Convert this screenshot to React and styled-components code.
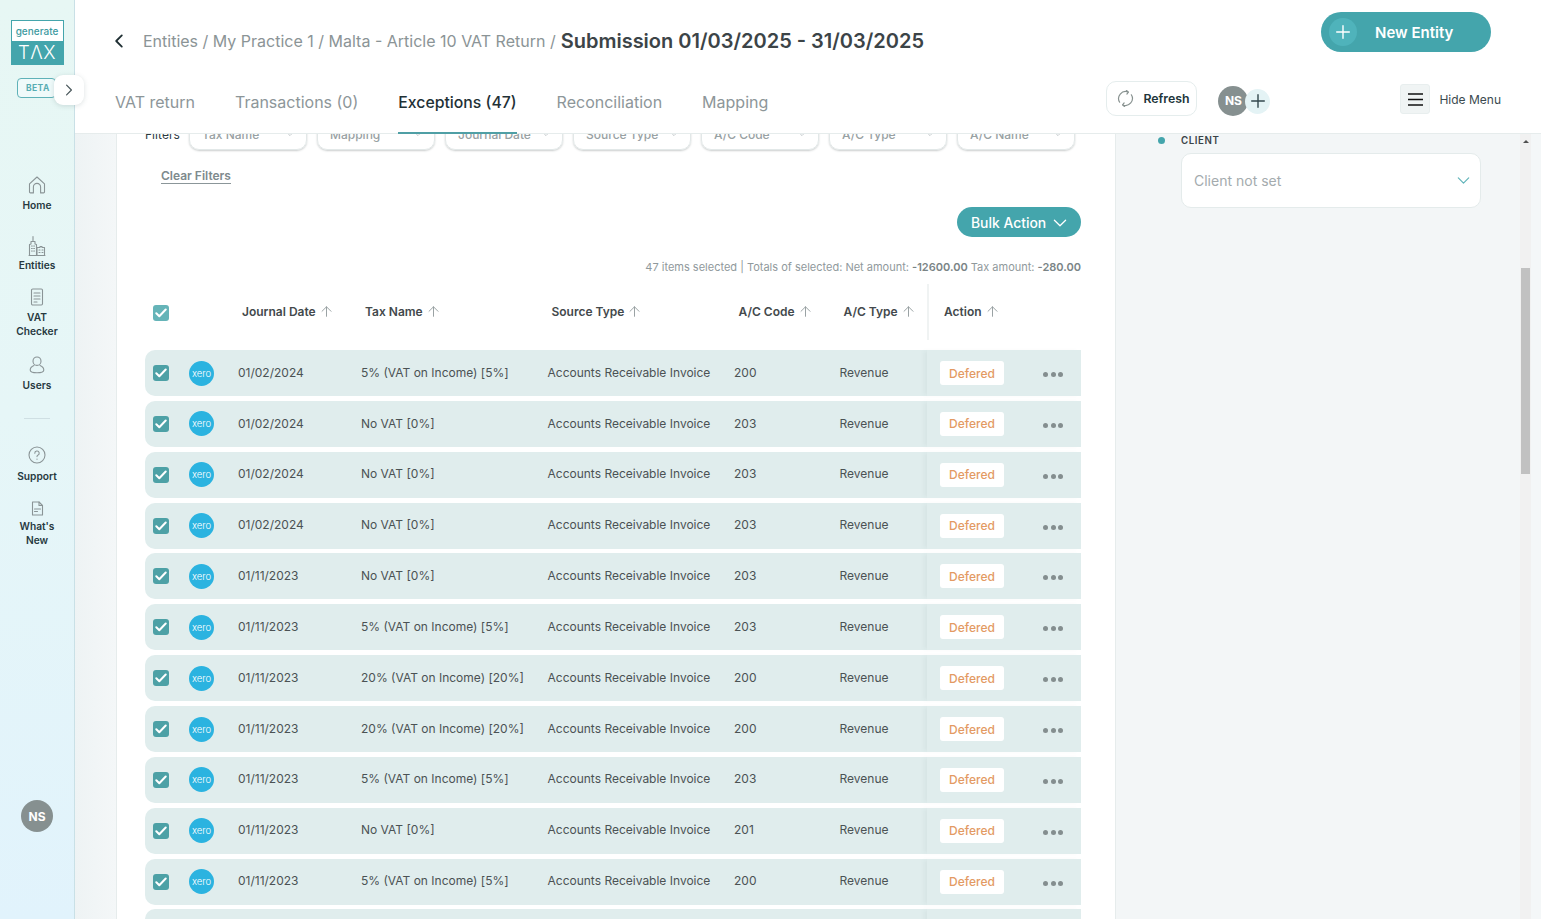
import React from "react";
import styled, { createGlobalStyle } from "styled-components";

const Global = createGlobalStyle`
  html, body { margin: 0; padding: 0; height: 100%; overflow: hidden; background: #fff; }
  body { font-family: Inter, "Liberation Sans", sans-serif; }
  * { box-sizing: border-box; }
`;

const TEAL = "#44a5ac";

const Page = styled.div`
  display: flex;
  width: 1541px;
  height: 919px;
  overflow: hidden;
`;

/* ---------- sidebar ---------- */
const Sidebar = styled.aside`
  position: relative;
  flex: 0 0 75px;
  display: flex;
  flex-direction: column;
  align-items: center;
  padding-top: 20px;
  background: linear-gradient(180deg, #e7f7f4 0%, #e6f6f7 45%, #e1f3fc 100%);
  border-right: 1px solid #c9e0e6;
`;
const Logo = styled.div`
  width: 53px;
  height: 45px;
  border: 1px solid ${TEAL};
  display: flex;
  flex-direction: column;
`;
const LogoTop = styled.div`
  height: 21px;
  background: #fff;
  color: #3d9aa1;
  font-size: 10px;
  font-weight: 500;
  line-height: 20px;
  text-align: center;
`;
const LogoBottom = styled.div`
  flex: 1;
  background: ${TEAL};
  color: #fff;
  font-size: 18.5px;
  font-weight: 300;
  letter-spacing: 0.5px;
  line-height: 23px;
  text-align: center;
`;
const BetaRow = styled.div`
  align-self: flex-start;
  margin: 13px 0 0 17px;
  width: 39px;
  height: 20px;
  border: 1px solid #5fb2b8;
  border-radius: 4px;
  color: #58adb3;
  font-size: 8.5px;
  font-weight: 700;
  letter-spacing: 0.4px;
  line-height: 18px;
  padding-left: 8px;
  background: #effafa;
`;
const Toggle = styled.button`
  position: absolute;
  left: 54px;
  top: 75px;
  width: 30px;
  height: 30px;
  padding: 0;
  border: 0;
  border-radius: 9px;
  background: #fff;
  box-shadow: 0 1px 5px rgba(60, 90, 95, 0.18);
  display: flex;
  align-items: center;
  justify-content: center;
  z-index: 30;
`;
const Nav = styled.nav`
  display: flex;
  flex-direction: column;
  align-items: center;
  margin-top: 77px;
  width: 100%;
`;
const NavItem = styled.a`
  display: flex;
  flex-direction: column;
  align-items: center;
  height: ${(p) => p.$h}px;
  color: #27393f;
  font-size: 10.2px;
  font-weight: 600;
  line-height: 14px;
  text-align: center;
`;
const NavIcon = styled.span`
  display: flex;
  justify-content: center;
  align-items: center;
  height: ${(p) => p.$h || 24}px;
  margin-bottom: ${(p) => p.$mb ?? 3}px;
`;
const NavRule = styled.div`
  width: 26px;
  height: 1px;
  background: #cfdfe3;
  margin: 16px 0 27px;
`;
const SideAvatar = styled.div`
  margin-top: auto;
  margin-bottom: 87px;
  width: 32px;
  height: 32px;
  border-radius: 50%;
  background: #869090;
  color: #fff;
  font-size: 12px;
  font-weight: 700;
  display: flex;
  align-items: center;
  justify-content: center;
`;

/* ---------- main ---------- */
const Main = styled.main`
  flex: 1;
  min-width: 0;
  display: flex;
  flex-direction: column;
  height: 919px;
`;
const Header = styled.header`
  position: relative;
  z-index: 10;
  flex: 0 0 134px;
  background: #fff;
  border-bottom: 1px solid #e6ecec;
  display: flex;
  flex-direction: column;
`;
const TopBar = styled.div`
  flex: 0 0 81px;
  display: flex;
  align-items: flex-start;
  padding: 0 50px 0 40px;
`;
const Crumbs = styled.div`
  display: flex;
  align-items: center;
  height: 82px;
  flex: 1;
`;
const Back = styled.span`
  display: flex;
  width: 31px;
  margin-left: -3px;
`;
const CrumbTrail = styled.span`
  color: #8b9496;
  font-size: 16px;
  white-space: nowrap;
`;
const CrumbCurrent = styled.span`
  color: #3c4447;
  font-size: 20px;
  font-weight: 600;
  margin-left: 5px;
  white-space: nowrap;
`;
const NewEntity = styled.button`
  margin-top: 12px;
  width: 170px;
  height: 40px;
  border: 0;
  border-radius: 20px;
  background: ${TEAL};
  color: #fff;
  font-family: inherit;
  font-size: 15px;
  font-weight: 600;
  display: flex;
  align-items: center;
  padding: 0 0 0 8px;
`;
const NewEntityPlus = styled.span`
  width: 28px;
  height: 28px;
  border-radius: 50%;
  background: #4fb3bb;
  display: flex;
  align-items: center;
  justify-content: center;
  margin-right: 18px;
`;
const TabBar = styled.div`
  flex: 1;
  display: flex;
  align-items: stretch;
  padding: 0 40px;
`;
const Tab = styled.a`
  position: relative;
  margin-right: 40px;
  color: ${(p) => (p.$active ? "#1f3136" : "#8d9699")};
  font-size: ${(p) => (p.$active ? 15.8 : 16)}px;
  font-weight: ${(p) => (p.$active ? 500 : 400)};
  line-height: 41px;
  white-space: nowrap;
  &::after {
    content: "";
    display: ${(p) => (p.$active ? "block" : "none")};
    position: absolute;
    left: 0;
    right: 0;
    bottom: -1px;
    height: 2px;
    background: #4f9fa5;
  }
`;
const TabTools = styled.div`
  margin: -1px 0 0 auto;
  display: flex;
  align-items: flex-start;
`;
const Refresh = styled.button`
  width: 91px;
  height: 35px;
  border: 1px solid #e5eded;
  border-radius: 10px;
  background: #fff;
  color: #21343a;
  font-family: inherit;
  font-size: 12.3px;
  font-weight: 600;
  display: flex;
  align-items: center;
  gap: 9px;
  padding: 0 0 0 10px;
`;
const Assignees = styled.div`
  position: relative;
  display: flex;
  width: 52px;
  height: 30px;
  margin: 4.5px 0 0 21px;
`;
const AssigneeAvatar = styled.div`
  width: 30px;
  height: 30px;
  border-radius: 50%;
  background: #869090;
  color: #fff;
  font-size: 12px;
  font-weight: 700;
  display: flex;
  align-items: center;
  justify-content: center;
`;
const AssigneeAdd = styled.div`
  position: absolute;
  left: 27px;
  top: 3px;
  width: 25px;
  height: 25px;
  border-radius: 50%;
  background: #e4f3f5;
  display: flex;
  align-items: center;
  justify-content: center;
`;
const HideMenu = styled.div`
  display: flex;
  align-items: center;
  margin: 3px 0 0 130px;
  color: #3b4a4f;
  font-size: 12px;
  gap: 9px;
`;
const Burger = styled.span`
  width: 30px;
  height: 30px;
  border-radius: 3px;
  background: #f0f4f4;
  border: 1px solid #e8eeee;
  display: flex;
  align-items: center;
  justify-content: center;
`;

const Content = styled.div`
  flex: 1;
  min-height: 0;
  display: flex;
  overflow: hidden;
  background: linear-gradient(90deg, #eef3f4 0, #f4f7f8 41px);
  padding-left: 41px;
`;
const Card = styled.section`
  flex: 0 0 1000px;
  background: #fff;
  border-left: 1px solid #e6ecec;
  border-right: 1px solid #e6ecec;
  padding: 0 34px 0 28px;
  overflow: hidden;
`;
const FilterRow = styled.div`
  margin-top: -18px;
  display: flex;
  align-items: center;
  height: 34px;
`;
const FilterLabel = styled.span`
  width: 44px;
  color: #2c3a3f;
  font-size: 12px;
  padding-top: 2px;
`;
const FilterPills = styled.div`
  display: flex;
  gap: 10px;
`;
const Pill = styled.div`
  width: 118px;
  height: 34px;
  border: 1px solid #e2e8e8;
  border-radius: 10px;
  box-shadow: 0 1px 2px rgba(70, 80, 80, 0.28);
  color: #98a1a3;
  font-size: 12px;
  font-weight: 500;
  display: flex;
  align-items: center;
  justify-content: space-between;
  padding: 2px 12px 0;
`;
const ClearFilters = styled.a`
  display: block;
  width: max-content;
  margin: 19px 0 0 16px;
  color: #7e8a8d;
  font-size: 12px;
  font-weight: 600;
  line-height: 14px;
  border-bottom: 1px solid #8b9699;
`;
const BulkRow = styled.div`
  display: flex;
  justify-content: flex-end;
  margin-top: 23px;
`;
const BulkAction = styled.button`
  width: 124px;
  height: 30px;
  border: 0;
  border-radius: 15px;
  background: ${TEAL};
  color: #fff;
  font-family: inherit;
  font-size: 13.9px;
  font-weight: 500;
  display: flex;
  align-items: center;
  gap: 7px;
  padding: 1px 0 0 14px;
`;
const Totals = styled.div`
  margin-top: 23px;
  text-align: right;
  color: #90999c;
  font-size: 11px;
  line-height: 14px;
  & b {
    font-weight: 600;
    color: #7a8486;
  }
`;
const TableHead = styled.div`
  display: grid;
  grid-template-columns: 97px 123px 186.5px 187px 105px 83.5px 1fr;
  height: 56px;
  margin-top: 10px;
  margin-bottom: 10.1px;
  align-items: center;
  color: #43494c;
  font-size: 12px;
  font-weight: 600;
`;
const HeadCell = styled.div`
  display: flex;
  align-items: center;
  gap: 5px;
  height: 100%;
  padding-bottom: 2px;
  white-space: nowrap;
  ${(p) => p.$sticky && `border-left: 2px solid #f0f3f3; padding-left: 15px;`}
`;
const HeadCheckCell = styled.div`
  padding: 1px 0 0 8px;
  display: flex;
`;
const Check = styled.span`
  width: 16px;
  height: 16px;
  border-radius: 3px;
  background: ${(p) => (p.$light ? "#65b4b8" : "#4da1a6")};
  display: flex;
  align-items: center;
  justify-content: center;
`;
const Rows = styled.div`
  display: flex;
  flex-direction: column;
  gap: 4.85px;
`;
const Row = styled.div`
  flex: 0 0 46px;
  display: grid;
  grid-template-columns: 44px 49px 123px 186.5px 186.5px 105.5px 87.5px 1fr;
  align-items: center;
  background: #e0eded;
  border-radius: 10px 0 0 10px;
  color: #4b5254;
  font-size: 12px;
  white-space: nowrap;
`;
const RowCheck = styled.div`
  padding-left: 8px;
  display: flex;
`;
const Xero = styled.span`
  width: 25px;
  height: 25px;
  border-radius: 50%;
  background: #2bb3e0;
  color: #fff;
  font-size: 9.5px;
  font-weight: 300;
  display: flex;
  align-items: center;
  justify-content: center;
`;
const Cell = styled.span`
  margin-top: -1.8px;
`;
const ActionCell = styled.div`
  height: 46px;
  display: flex;
  align-items: center;
  padding-left: 13px;
  box-shadow: -4px 0 4px -1px rgba(90, 120, 120, 0.06);
`;
const Deferred = styled.span`
  width: 64px;
  height: 24px;
  border-radius: 3px;
  background: #fff;
  color: #e39a63;
  font-size: 12px;
  font-weight: 500;
  display: flex;
  align-items: center;
  justify-content: center;
`;
const Dots = styled.span`
  display: flex;
  gap: 2.5px;
  margin: 3px 0 0 39px;
  & i {
    width: 5px;
    height: 5px;
    border-radius: 50%;
    background: #848e8f;
  }
`;

const RightPanel = styled.aside`
  flex: 0 0 404px;
  padding: 0 39px 0 42px;
  background: #f3f6f7;
`;
const FieldLabel = styled.div`
  display: flex;
  align-items: center;
  height: 12px;
  color: #3a4347;
  font-size: 9.7px;
  font-weight: 600;
  letter-spacing: 0.6px;
`;
const Bullet = styled.i`
  width: 7px;
  height: 7px;
  border-radius: 50%;
  background: ${TEAL};
  margin-right: 16px;
`;
const ClientSelect = styled.div`
  margin: 7px 0 0 23px;
  height: 55px;
  width: 300px;
  background: #fff;
  border: 1px solid #e4ebeb;
  border-radius: 10px;
  display: flex;
  align-items: center;
  justify-content: space-between;
  padding: 0 10px 0 12px;
  color: #a4abae;
  font-size: 14px;
`;
const ScrollTrack = styled.div`
  flex: 0 0 11px;
  background: #f1f1f1;
  display: flex;
  flex-direction: column;
  align-items: center;
`;
const ScrollArrow = styled.i`
  margin-top: 6px;
  width: 0;
  height: 0;
  border-left: 3px solid transparent;
  border-right: 3px solid transparent;
  border-bottom: 3px solid #505050;
`;
const ScrollThumb = styled.div`
  margin-top: 125px;
  width: 9px;
  height: 206px;
  background: #c1c1c1;
`;

/* ---------- icons ---------- */
const Ico = ({ w = 20, h = 20, vb = "0 0 20 20", c = "#8a9496", sw = 1.1, children }) => (
  <svg width={w} height={h} viewBox={vb} fill="none" stroke={c} strokeWidth={sw} strokeLinecap="round" strokeLinejoin="round">
    {children}
  </svg>
);
const HomeIcon = () => (
  <Ico>
    <path d="M2.5 8.8 10 2l7.5 6.8V17a.9.9 0 0 1-.9.9h-3V12a3.6 3.6 0 0 0-7.2 0v5.9h-3a.9.9 0 0 1-.9-.9z" />
  </Ico>
);
const EntitiesIcon = () => (
  <Ico w={18} h={22} vb="0 0 18 22">
    <path d="M5 1.5v4M1.5 20.5V9.5l1.500-.5V6.500h4V9l1.500.5v11zM9 20.5v-8h3v-1h2v1h2.500v8zM1 20.5h16" />
    <path d="M3.500 11h.8M5.700 11h.8M3.500 13.500h.8M5.700 13.500h.8M3.500 16h.8M5.700 16h.8M11 15h1M14 15h1M11 17.500h1M14 17.500h1" />
  </Ico>
);
const DocIcon = () => (
  <Ico w={14} h={18} vb="0 0 14 18">
    <rect x="1.5" y="1" width="11" height="16" rx="1.2" />
    <path d="M4 5h6M4 8h6M4 11h6M4 14h3" />
  </Ico>
);
const UserIcon = () => (
  <Ico w={16} h={18} vb="0 0 16 18">
    <ellipse cx="8" cy="5.2" rx="4" ry="4.2" />
    <path d="M5 9.6C3 10.4 1.2 11.6 1.2 14c0 1.9 2.4 2.8 6.800 2.800s6.800-.9 6.800-2.800c0-2.400-1.800-3.600-3.800-4.400" />
  </Ico>
);
const HelpIcon = () => (
  <Ico w={18} h={18} vb="0 0 18 18">
    <circle cx="9" cy="9" r="8" />
    <path d="M6.800 7.200A2.200 2.200 0 1 1 9.800 9.200c-.6.3-.8.7-.8 1.400" />
    <path d="M9 13v.2" />
  </Ico>
);
const FileIcon = () => (
  <Ico w={13} h={15} vb="0 0 13 15">
    <path d="M1.500 1h6.500l3.500 3.500V14h-10z" />
    <path d="M8 1v3.500h3.500M3.500 8h6M3.500 10.500h3" />
  </Ico>
);
const Chevron = ({ dir = "down", size = 10, c = "#b8bfc1", sw = 1 }) => {
  const d = {
    down: "M1 3l4 4 4-4",
    right: "M3 1l4 4-4 4",
    left: "M7 1L3 5l4 4",
  }[dir];
  return (
    <svg width={size} height={size} viewBox="0 0 10 10" fill="none" stroke={c} strokeWidth={sw} strokeLinecap="round" strokeLinejoin="round">
      <path d={d} />
    </svg>
  );
};
const Plus = ({ size = 14, c = "#fff", sw = 1.4 }) => (
  <svg width={size} height={size} viewBox="0 0 14 14" fill="none" stroke={c} strokeWidth={sw} strokeLinecap="round">
    <path d="M7 .7v12.600M.7 7h12.600" />
  </svg>
);
const Tick = () => (
  <svg width="12" height="10" viewBox="0 0 12 10" fill="none" stroke="#fff" strokeWidth="2" strokeLinecap="round" strokeLinejoin="round">
    <path d="M1.300 5.300 4.300 8.300 10.700 1.500" />
  </svg>
);
const SortUp = () => (
  <svg width="11" height="11" viewBox="0 0 11 11" fill="none" stroke="#9aa2a4" strokeWidth="1" strokeLinecap="round" strokeLinejoin="round">
    <path d="M5.500 10.300V.8M1 5.300 5.500.8 10 5.300" />
  </svg>
);
const RefreshIcon = () => (
  <svg width="17" height="17" viewBox="0 0 16 16" fill="none" stroke="#87918f" strokeWidth="1.100" strokeLinecap="round" strokeLinejoin="round">
    <path d="M2.500 11.500A6.600 6.600 0 0 1 10.500 1.900" />
    <path d="M13.500 4.500A6.600 6.600 0 0 1 5.500 14.100" />
    <path d="M9 .5l1.700 1.500L9.300 3.800M7 15.500l-1.700-1.500 1.400-1.800" />
  </svg>
);
const BurgerIcon = () => (
  <svg width="15" height="13" viewBox="0 0 15 13" fill="none" stroke="#111" strokeWidth="1.600">
    <path d="M0 1h15M0 6.500h15M0 12h15" />
  </svg>
);

/* ---------- data ---------- */
const FIVE = "5% (VAT on Income) [5%]";
const NOVAT = "No VAT [0%]";
const TWENTY = "20% (VAT on Income) [20%]";
const rows = [
  ["01/02/2024", FIVE, "200"],
  ["01/02/2024", NOVAT, "203"],
  ["01/02/2024", NOVAT, "203"],
  ["01/02/2024", NOVAT, "203"],
  ["01/11/2023", NOVAT, "203"],
  ["01/11/2023", FIVE, "203"],
  ["01/11/2023", TWENTY, "200"],
  ["01/11/2023", TWENTY, "200"],
  ["01/11/2023", FIVE, "203"],
  ["01/11/2023", NOVAT, "201"],
  ["01/11/2023", FIVE, "200"],
  ["01/11/2023", FIVE, "200"],
];
const filters = ["Tax Name", "Mapping", "Journal Date", "Source Type", "A/C Code", "A/C Type", "A/C Name"];
const heads = ["Journal Date", "Tax Name", "Source Type", "A/C Code", "A/C Type"];
const tabs = ["VAT return", "Transactions (0)", "Exceptions (47)", "Reconciliation", "Mapping"];

export default function App() {
  return (
    <Page>
      <Global />
      <Sidebar>
        <Logo>
          <LogoTop>generate</LogoTop>
          <LogoBottom>TΛX</LogoBottom>
        </Logo>
        <BetaRow>BETA</BetaRow>
        <Toggle>
          <Chevron dir="right" size={12} c="#48565a" sw={1} />
        </Toggle>
        <Nav>
          <NavItem $h={60}>
            <NavIcon $h={20} $mb={3}><HomeIcon /></NavIcon>Home
          </NavItem>
          <NavItem $h={53}>
            <NavIcon $h={22} $mb={1}><EntitiesIcon /></NavIcon>Entities
          </NavItem>
          <NavItem $h={68}>
            <NavIcon $h={18} $mb={4}><DocIcon /></NavIcon>VAT<br />Checker
          </NavItem>
          <NavItem $h={46}>
            <NavIcon $h={18} $mb={4}><UserIcon /></NavIcon>Users
          </NavItem>
          <NavRule />
          <NavItem $h={55}>
            <NavIcon $h={18} $mb={5}><HelpIcon /></NavIcon>Support
          </NavItem>
          <NavItem $h={60}>
            <NavIcon $h={15} $mb={3}><FileIcon /></NavIcon>What's<br />New
          </NavItem>
        </Nav>
        <SideAvatar>NS</SideAvatar>
      </Sidebar>
      <Main>
        <Header>
          <TopBar>
            <Crumbs>
              <Back><Chevron dir="left" size={14} c="#1f2f33" sw={1.3} /></Back>
              <CrumbTrail>Entities / My Practice 1 / Malta - Article 10 VAT Return /</CrumbTrail>
              <CrumbCurrent>Submission 01/03/2025 - 31/03/2025</CrumbCurrent>
            </Crumbs>
            <NewEntity>
              <NewEntityPlus><Plus /></NewEntityPlus>New Entity
            </NewEntity>
          </TopBar>
          <TabBar>
            {tabs.map((t) => (
              <Tab key={t} $active={t.startsWith("Exceptions")}>{t}</Tab>
            ))}
            <TabTools>
              <Refresh><RefreshIcon />Refresh</Refresh>
              <Assignees>
                <AssigneeAvatar>NS</AssigneeAvatar>
                <AssigneeAdd><Plus c="#33484d" size={14} /></AssigneeAdd>
              </Assignees>
              <HideMenu>
                <Burger><BurgerIcon /></Burger>Hide Menu
              </HideMenu>
            </TabTools>
          </TabBar>
        </Header>
        <Content>
          <Card>
            <FilterRow>
              <FilterLabel>Filters</FilterLabel>
              <FilterPills>
                {filters.map((f) => (
                  <Pill key={f}>{f}<Chevron size={8} /></Pill>
                ))}
              </FilterPills>
            </FilterRow>
            <ClearFilters>Clear Filters</ClearFilters>
            <BulkRow>
              <BulkAction>Bulk Action <Chevron size={14} c="#fff" sw={0.9} /></BulkAction>
            </BulkRow>
            <Totals>
              47 items selected | Totals of selected: Net amount: <b>-12600.00</b> Tax amount: <b>-280.00</b>
            </Totals>
            <TableHead>
              <HeadCheckCell><Check $light><Tick /></Check></HeadCheckCell>
              {heads.map((h) => (
                <HeadCell key={h}>{h} <SortUp /></HeadCell>
              ))}
              <HeadCell $sticky>Action <SortUp /></HeadCell>
            </TableHead>
            <Rows>
              {rows.map(([date, tax, code], i) => (
                <Row key={i}>
                  <RowCheck><Check><Tick /></Check></RowCheck>
                  <Xero>xero</Xero>
                  <Cell>{date}</Cell>
                  <Cell>{tax}</Cell>
                  <Cell>Accounts Receivable Invoice</Cell>
                  <Cell>{code}</Cell>
                  <Cell>Revenue</Cell>
                  <ActionCell>
                    <Deferred>Defered</Deferred>
                    <Dots><i /><i /><i /></Dots>
                  </ActionCell>
                </Row>
              ))}
            </Rows>
          </Card>
          <RightPanel>
            <FieldLabel><Bullet />CLIENT</FieldLabel>
            <ClientSelect>
              Client not set
              <Chevron size={13} c="#5fb3b9" sw={0.9} />
            </ClientSelect>
          </RightPanel>
          <ScrollTrack>
            <ScrollArrow />
            <ScrollThumb />
          </ScrollTrack>
        </Content>
      </Main>
    </Page>
  );
}
